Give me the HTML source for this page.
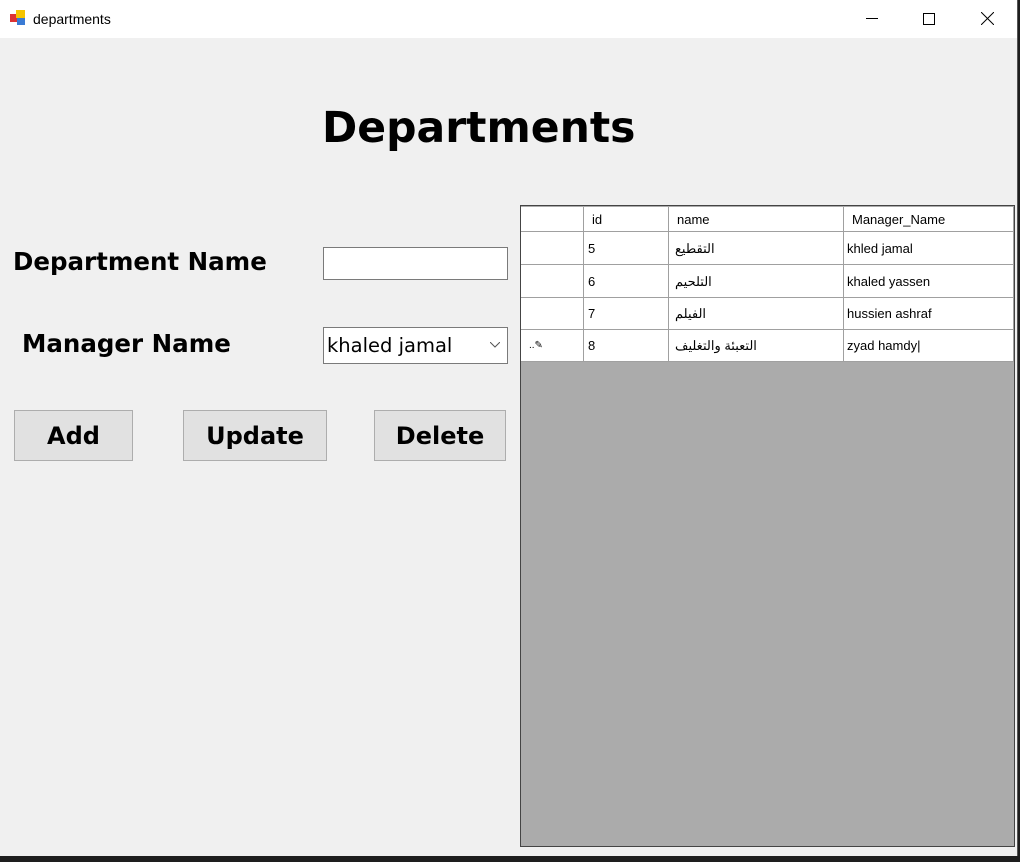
<!DOCTYPE html>
<html><head><meta charset="utf-8"><style>
body{margin:0;width:1020px;height:862px;background:#1e1e1e;position:relative;overflow:hidden;font-family:"Liberation Sans",sans-serif}
.win{position:absolute;left:0;top:0;width:1017px;height:856px;background:#f0f0f0;border-right:1px solid #555}
.title{position:absolute;left:0;top:0;width:1017px;height:38px;background:#fff}
.abs{position:absolute}
.lbl{position:absolute;font-weight:bold;font-size:24.5px;font-family:"DejaVu Sans","Liberation Sans",sans-serif;color:#000}
.btn{position:absolute;background:#e1e1e1;border:1px solid #adadad;box-sizing:border-box;font-weight:bold;font-size:24px;font-family:"DejaVu Sans",sans-serif;text-align:center;line-height:51px}
.grid{position:absolute;left:520px;top:205px;width:495px;height:642px;background:#ababab;border:1px solid #444;box-sizing:border-box}
.c{position:absolute;background:#fff;border-right:1px solid #a0a0a0;border-bottom:1px solid #a0a0a0;box-sizing:border-box;font-size:13px;font-family:"Liberation Sans","Noto Sans CJK SC",sans-serif;padding-left:4px;line-height:33px}
</style></head><body>
<div class="win">
<div class="title">
<svg class="abs" style="left:10px;top:10px" width="16" height="16"><rect x="0" y="4" width="7" height="8" fill="#d33"/><rect x="6" y="0" width="9" height="8" fill="#f5c400"/><rect x="7" y="8" width="8" height="7" fill="#3a7bd5"/></svg>
<div class="abs" style="left:33px;top:11px;font-size:14px">departments</div>
<div class="abs" style="left:866px;top:18px;width:12px;height:1px;background:#000"></div>
<div class="abs" style="left:923px;top:13px;width:10px;height:10px;border:1px solid #000"></div>
<svg class="abs" style="left:981px;top:12px" width="13" height="13"><path d="M0 0L13 13M13 0L0 13" stroke="#000" stroke-width="1"/></svg>
</div>
<div class="lbl" style="left:322px;top:104px;font-size:42.5px">Departments</div>
<div class="lbl" style="left:13px;top:247px">Department Name</div>
<div class="lbl" style="left:22px;top:329px">Manager Name</div>
<div class="abs" style="left:323px;top:247px;width:185px;height:33px;background:#fff;border:1px solid #7a7a7a;box-sizing:border-box"></div>
<div class="abs" style="left:323px;top:327px;width:185px;height:37px;background:#fff;border:1px solid #7a7a7a;box-sizing:border-box;font-size:19.5px;font-family:'DejaVu Sans',sans-serif;padding:6px 0 0 3px">khaled jamal</div>
<svg class="abs" style="left:490px;top:342px" width="10" height="6"><path d="M0 0L5 5L10 0" stroke="#555" fill="none"/></svg>
<div class="btn" style="left:14px;top:410px;width:119px;height:51px">Add</div>
<div class="btn" style="left:183px;top:410px;width:144px;height:51px">Update</div>
<div class="btn" style="left:374px;top:410px;width:132px;height:51px">Delete</div>
<div class="grid">
<div class="c" style="left:0;top:1px;width:63px;height:25px"></div>
<div class="c" style="left:63px;top:1px;width:85px;height:25px;line-height:26px;padding-left:8px">id</div>
<div class="c" style="left:148px;top:1px;width:175px;height:25px;line-height:26px;padding-left:8px">name</div>
<div class="c" style="left:323px;top:1px;width:170px;height:25px;line-height:26px;padding-left:8px">Manager_Name</div>

<div class="c" style="left:0;top:26px;width:63px;height:33px"></div>
<div class="c" style="left:63px;top:26px;width:85px;height:33px">5</div>
<div class="c" style="left:148px;top:26px;width:175px;height:33px;padding-left:6px">التقطيع</div>
<div class="c" style="left:323px;top:26px;width:170px;height:33px;padding-left:3px">khled jamal</div>

<div class="c" style="left:0;top:59px;width:63px;height:33px"></div>
<div class="c" style="left:63px;top:59px;width:85px;height:33px">6</div>
<div class="c" style="left:148px;top:59px;width:175px;height:33px;padding-left:6px">التلحيم</div>
<div class="c" style="left:323px;top:59px;width:170px;height:33px;padding-left:3px">khaled yassen</div>

<div class="c" style="left:0;top:92px;width:63px;height:32px;line-height:32px"></div>
<div class="c" style="left:63px;top:92px;width:85px;height:32px;line-height:32px">7</div>
<div class="c" style="left:148px;top:92px;width:175px;height:32px;line-height:32px;padding-left:6px">الفيلم</div>
<div class="c" style="left:323px;top:92px;width:170px;height:32px;line-height:32px;padding-left:3px">hussien ashraf</div>

<div class="c" style="left:0;top:124px;width:63px;height:32px;line-height:32px;font-size:10px;padding-left:8px">..✎</div>
<div class="c" style="left:63px;top:124px;width:85px;height:32px;line-height:32px">8</div>
<div class="c" style="left:148px;top:124px;width:175px;height:32px;line-height:32px;padding-left:6px">التعبئة والتغليف</div>
<div class="c" style="left:323px;top:124px;width:170px;height:32px;line-height:32px;padding-left:3px">zyad hamdy|</div>
</div>
</div>
</body></html>
